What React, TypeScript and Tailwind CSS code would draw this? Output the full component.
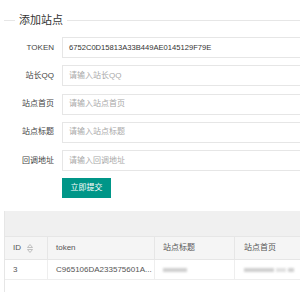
import React from 'react';

const fields = [
  { label: 'TOKEN', value: '6752C0D15813A33B449AE0145129F79E', placeholder: '' },
  { label: '站长QQ', value: '', placeholder: '请输入站长QQ' },
  { label: '站点首页', value: '', placeholder: '请输入站点首页' },
  { label: '站点标题', value: '', placeholder: '请输入站点标题' },
  { label: '回调地址', value: '', placeholder: '请输入回调地址' },
];

const SortIcon: React.FC = () => (
  <svg width="6" height="9" viewBox="0 0 6 9" className="ml-[6px]">
    <path d="M3 0.5 L5.5 3.5 L0.5 3.5 Z" fill="none" stroke="#b2b2b2" strokeWidth="0.8" />
    <path d="M3 8.5 L5.5 5.5 L0.5 5.5 Z" fill="none" stroke="#b2b2b2" strokeWidth="0.8" />
  </svg>
);

export default function App() {
  return (
    <div className="w-[300px] h-[300px] overflow-hidden bg-white font-['Liberation_Sans','Noto_Sans_CJK_SC',sans-serif]">
      <div className="w-[380px] pl-[4px] pt-[12px]">
        {/* fieldset title */}
        <div className="flex items-center h-[16px]">
          <div className="w-[11px] h-px bg-[#e6e6e6]"></div>
          <div className="px-[4px] text-[11px] leading-[16px] text-[#333]">添加站点</div>
          <div className="flex-1 h-px bg-[#e6e6e6]"></div>
        </div>

        {/* form */}
        <div className="mt-[9px] flex flex-col gap-[7.25px]">
          {fields.map((f) => (
            <div key={f.label} className="flex items-center h-[21px]">
              <div className="w-[50px] text-right text-[8px] text-[#444]">{f.label}</div>
              <div className="ml-[8px] flex-1 h-[21px] border border-[#e6e6e6] flex items-center pl-[6px] text-[8px]">
                {f.value ? (
                  <span className="text-[#333] text-[7.6px]">{f.value}</span>
                ) : (
                  <span className="text-[#a9a9a9]">{f.placeholder}</span>
                )}
              </div>
            </div>
          ))}
        </div>

        <button className="mt-[7px] ml-[58px] w-[49px] h-[20px] bg-[#009688] text-white text-[8px] flex items-center justify-center">
          立即提交
        </button>

        {/* table */}
        <div className="mt-[13px] border-l border-[#e6e6e6]">
          <div className="h-[26px] bg-[#f0f0f0] border-b border-[#e6e6e6]"></div>
          <div className="flex h-[23px] bg-[#f5f5f5] border-b border-[#e6e6e6] text-[8px] text-[#555]">
            <div className="w-[43px] flex items-center px-[8px] border-r border-[#e6e6e6]">
              ID<SortIcon />
            </div>
            <div className="w-[107px] flex items-center px-[8px] border-r border-[#e6e6e6]">token</div>
            <div className="w-[80px] flex items-center px-[8px] border-r border-[#e6e6e6]">站点标题</div>
            <div className="flex-1 flex items-center px-[9px]">站点首页</div>
          </div>
          <div className="flex h-[20px] border-b border-[#eeeeee] text-[8px] text-[#555]">
            <div className="w-[43px] flex items-center px-[8px] border-r border-[#eeeeee]">3</div>
            <div className="w-[107px] flex items-center px-[8px] border-r border-[#eeeeee] whitespace-nowrap overflow-hidden">
              C965106DA233575601A...
            </div>
            <div className="w-[80px] flex items-center px-[8px] border-r border-[#eeeeee]">
              <div className="w-[24px] h-[4px] bg-[#cfcfcf] blur-[1px]"></div>
            </div>
            <div className="flex-1 flex items-center px-[9px] gap-[2px]">
              <div className="w-[30px] h-[4px] bg-[#cfcfcf] blur-[1px]"></div>
              <div className="w-[10px] h-[4px] bg-[#e0e0e0] blur-[1px]"></div>
              <div className="w-[6px] h-[4px] bg-[#d0d0d0] blur-[1px]"></div>
            </div>
          </div>
          <div className="h-[12px]"></div>
        </div>
      </div>
    </div>
  );
}
